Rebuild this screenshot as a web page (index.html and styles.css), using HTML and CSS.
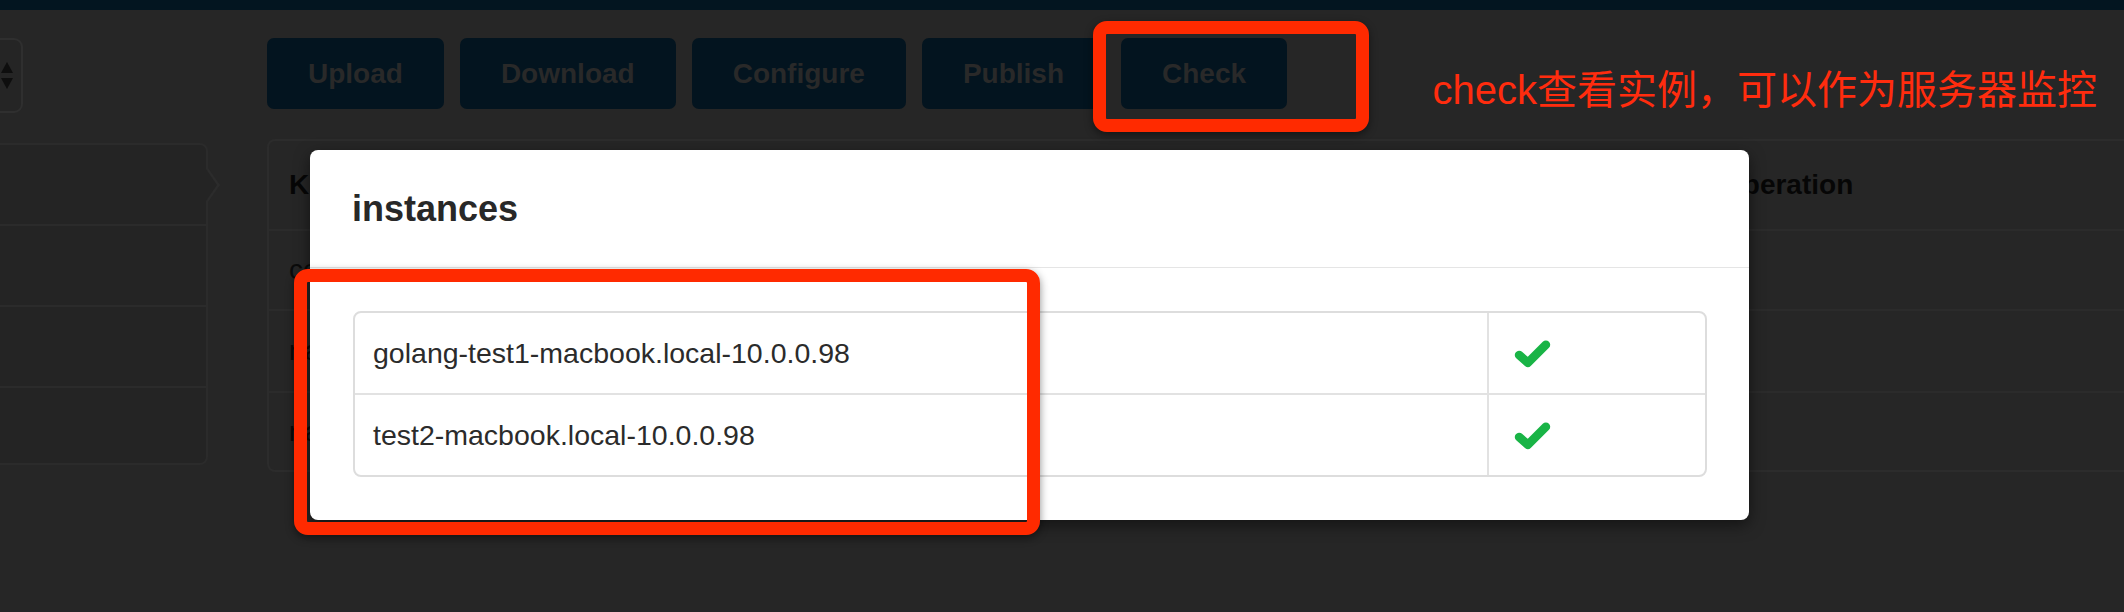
FILE: index.html
```html
<!DOCTYPE html>
<html lang="zh-CN">
<head>
<meta charset="utf-8">
<title>instances</title>
<link rel="stylesheet" href="styles.css">
</head>
<body>
<div class="topbar"></div>
<div class="page">
  <aside class="sidebar">
    <div class="select">
      <svg class="select-arrows" viewBox="0 0 12 27" width="12" height="27"><polygon points="6,0 12,11 0,11" fill="#0e0e0e"/><polygon points="0,16 12,16 6,27" fill="#0e0e0e"/></svg>
    </div>
    <div class="list">
      <div class="list-row active"></div>
      <div class="list-row"></div>
      <div class="list-row"></div>
      <div class="list-row last"></div>
    </div>
  </aside>
  <main class="content">
    <div class="toolbar">
      <button class="btn">Upload</button>
      <button class="btn">Download</button>
      <button class="btn">Configure</button>
      <button class="btn">Publish</button>
      <button class="btn">Check</button>
      <div class="note">check查看实例，可以作为服务器监控</div>
    </div>
    <div class="datagrid">
      <div class="cell head">Key</div>
      <div class="cell head">Operation</div>
      <div class="cell">config</div>
      <div class="cell"></div>
      <div class="cell">name</div>
      <div class="cell"></div>
      <div class="cell last">name</div>
      <div class="cell last"></div>
    </div>
  </main>
</div>

<div class="modal">
  <div class="modal-header"><h4 class="modal-title">instances</h4></div>
  <div class="modal-body">
    <div class="inst-table">
      <div class="inst-row">
        <div class="inst-name">golang-test1-macbook.local-10.0.0.98</div>
        <div class="inst-status"><svg class="ok" viewBox="0 0 36 28" width="37" height="29"><polyline points="5,15.5 13.5,23 31,5.5" fill="none" stroke="#19b446" stroke-width="8.5" stroke-linecap="round" stroke-linejoin="round"/></svg></div>
      </div>
      <div class="inst-row">
        <div class="inst-name">test2-macbook.local-10.0.0.98</div>
        <div class="inst-status"><svg class="ok" viewBox="0 0 36 28" width="37" height="29"><polyline points="5,15.5 13.5,23 31,5.5" fill="none" stroke="#19b446" stroke-width="8.5" stroke-linecap="round" stroke-linejoin="round"/></svg></div>
      </div>
    </div>
  </div>
</div>

<div class="mark mark-check"></div>
<div class="mark mark-list"></div>
</body>
</html>
```
FILE: styles.css
```css
* { box-sizing: border-box; margin: 0; padding: 0; }
html, body { width: 2124px; height: 612px; overflow: hidden; }
body {
  background: #262626;
  font-family: "Liberation Sans", Arial, sans-serif;
  position: relative;
}
.topbar { height: 10px; background: #031520; }

.page {
  display: grid;
  grid-template-columns: 208px 1fr;
  column-gap: 59px;
  padding-top: 28px;
}

/* sidebar */
.sidebar { display: flex; flex-direction: column; gap: 30px; }
.select {
  margin-left: -100px;
  width: 123px;
  height: 75px;
  border: 2px solid #2f2f2f;
  border-radius: 9px;
  background: #252525;
  display: flex;
  align-items: center;
  justify-content: flex-end;
  padding-right: 8px;
}
.list {
  margin-left: -30px;
  width: 238px;
  height: 322px;
  background: #242424;
  border: 2px solid #2b2b2b;
  border-radius: 8px;
}
.list-row { height: 81px; border-bottom: 2px solid #2b2b2b; position: relative; }
.list-row.last { border-bottom: none; }
.list-row.active::before,
.list-row.active::after {
  content: "";
  position: absolute;
  top: 50%;
  width: 0; height: 0;
  border-style: solid;
}
.list-row.active::before {
  right: -14px;
  margin-top: -17px;
  border-width: 17px 0 17px 12px;
  border-color: transparent transparent transparent #2c2c2c;
}
.list-row.active::after {
  right: -11px;
  margin-top: -16px;
  border-width: 16px 0 16px 11px;
  border-color: transparent transparent transparent #242424;
}

/* content */
.content { display: flex; flex-direction: column; gap: 30px; min-width: 0; }
.toolbar { display: flex; align-items: flex-start; gap: 16px; height: 71px; padding-right: 27px; }
.btn {
  height: 71px;
  padding: 0 41px;
  background: #03141f;
  color: #292929;
  font-family: "Liberation Sans", Arial, sans-serif;
  font-weight: bold;
  font-size: 28px;
  border: none;
  border-radius: 7px;
  display: flex;
  align-items: center;
}
.note {
  margin-left: auto;
  margin-top: 28px;
  font-family: "Liberation Sans", "Noto Sans CJK SC", sans-serif;
  font-size: 40px;
  line-height: 48px;
  color: #ff2c0e;
  white-space: nowrap;
}

.datagrid {
  margin-right: -20px;
  height: 333px;
  border: 2px solid #2c2c2c;
  border-radius: 8px;
  display: grid;
  grid-template-columns: 1432px 1fr;
  grid-template-rows: 90px 80px 82px 1fr;
}
.cell {
  display: flex;
  align-items: center;
  padding-left: 20px;
  font-size: 28px;
  color: #0b0b0b;
  border-bottom: 2px solid #2b2b2b;
  white-space: nowrap;
  overflow: hidden;
}
.cell.head { font-weight: bold; color: #060606; }
.cell.last { border-bottom: none; }

/* modal */
.modal {
  position: absolute;
  left: 310px;
  top: 150px;
  width: 1439px;
  background: #fff;
  border-radius: 8px;
  box-shadow: 0 5px 15px rgba(0, 0, 0, 0.5);
}
.modal-header { padding: 42px 42px; border-bottom: 1px solid #e5e5e5; }
.modal-title {
  font-size: 36px;
  line-height: 33px;
  font-weight: bold;
  color: #282828;
}
.modal-body { padding: 43px 42px 43px 43px; }
.inst-table {
  border: 2px solid #dddddd;
  border-radius: 8px;
  overflow: hidden;
}
.inst-row {
  display: grid;
  grid-template-columns: 1134px 1fr;
  height: 82px;
  border-bottom: 2px solid #e2e2e2;
}
.inst-row:last-child { border-bottom: none; height: 80px; }
.inst-name {
  display: flex;
  align-items: center;
  padding-left: 18px;
  font-size: 28.5px;
  color: #2b2b2b;
  border-right: 2px solid #e2e2e2;
}
.inst-status { display: flex; align-items: center; padding-left: 25px; }
.ok { display: block; }

/* annotation marks */
.mark {
  position: absolute;
  border: 13px solid #ff2a00;
  border-radius: 14px;
  box-shadow: 0 3px 8px rgba(0, 0, 0, 0.45);
}
.mark-check { left: 1093px; top: 21px; width: 276px; height: 111px; }
.mark-list { left: 294px; top: 269px; width: 746px; height: 266px; }
```
